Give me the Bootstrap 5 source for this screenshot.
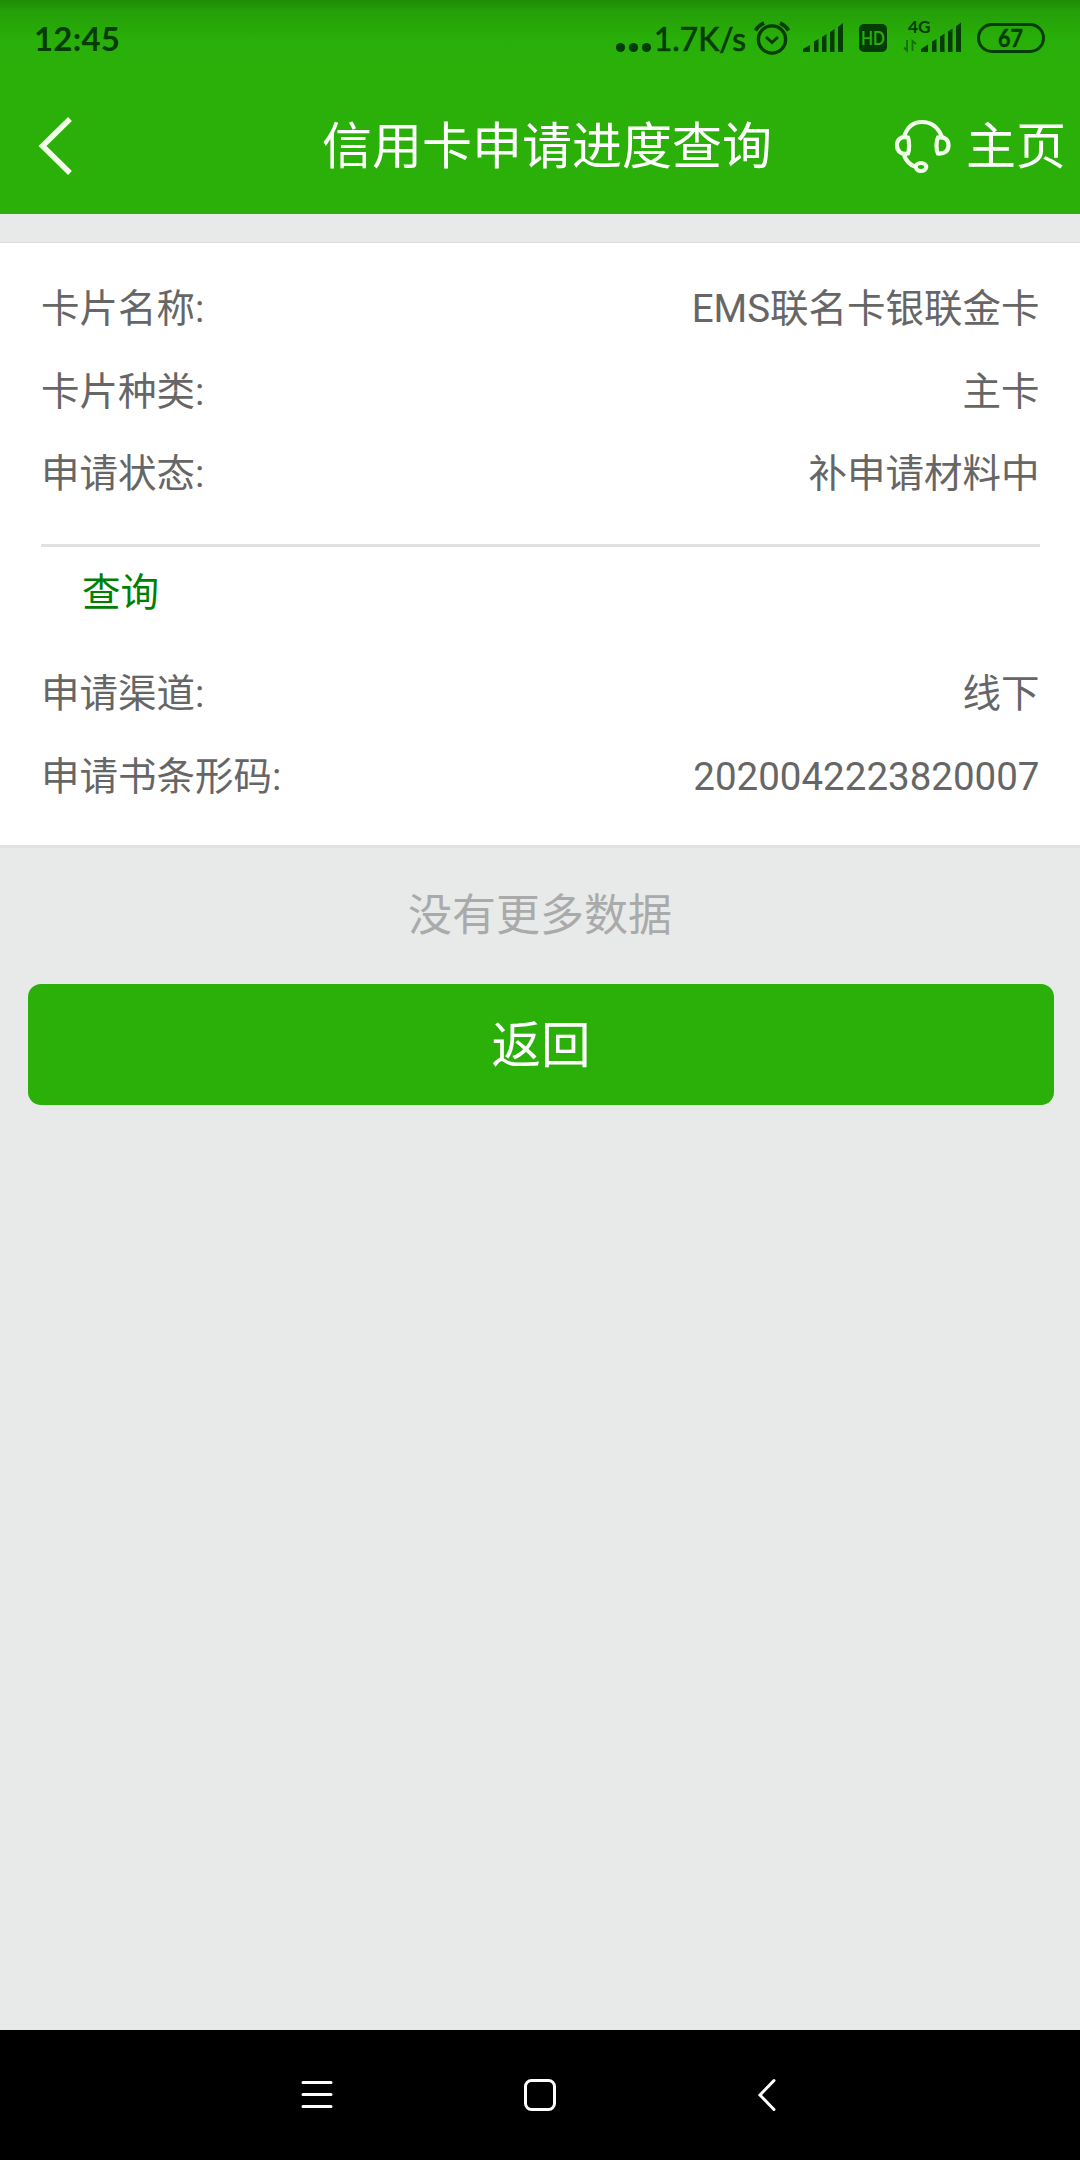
<!DOCTYPE html>
<html lang="zh-CN">
<head>
<meta charset="utf-8">
<meta name="viewport" content="width=device-width, initial-scale=1">
<title>信用卡申请进度查询</title>
<link rel="stylesheet" href="https://cdn.jsdelivr.net/npm/bootstrap@5.3.0/dist/css/bootstrap.min.css">
<style>
  body { font-family: Roboto, "Noto Sans CJK SC", sans-serif; background: #e8eaea; color: #666; }
  .screen { height: 2160px; width: 1080px; }
  .app-head { height: 214px; background: linear-gradient(#1f8c06 0, #25a008 12px, #29af09 40px, #2ab009 60px); }
  .status-bar { height: 78px; color: #043c06; font-family: Lato, sans-serif; padding-left: 34px; }
  .clock { font-size: 33px; font-weight: 700; letter-spacing: .2px; line-height: 76px; }
  .title-bar { height: 136px; font-size: 50px; line-height: 139px; }
  .side-l { width: 322px; padding-left: 38px; }
  .side-r { width: 308px; padding-right: 14px; gap: 15px; }
  .home-link { padding-top: 2px; }
  .info { margin-top: 28px; height: 606px; border-top: 1px solid #dadcdc; border-bottom: 3px solid #e0e2e2; padding: 25px 40.5px 0 41px; font-size: 38.5px; }
  .info-row { height: 82.7px; line-height: 82.7px; }
  .rule { height: 3px; background: #e0e0e0; margin: 28px -.5px 0 0; }
  .query { color: #008000; padding-left: 41px; line-height: 92px; height: 106px; display: block; text-decoration: none; }
  .no-more { color: #aaa; font-size: 44px; line-height: 136px; height: 136px; }
  .btn-back { margin: 0 26px 0 28px; height: 121px; border-radius: 13px; background: #2ab009; color: #fff; font-size: 49.5px; padding: 3px 0 0; line-height: 118px; border: 0; }
  .btn-back:hover { background: #2ab009; color: #fff; }
  .sys-nav { height: 130px; background: #000; }
</style>
</head>
<body>
<div class="screen d-flex flex-column overflow-hidden">
  <header class="app-head text-white">
    <div class="status-bar d-flex justify-content-between">
      <span class="clock">12:45</span>
      <svg width="470" height="78" viewBox="610 0 470 78" fill="#043c06" font-family="Lato, sans-serif">
        <circle cx="620.5" cy="47.5" r="4.6"/><circle cx="633.5" cy="47.5" r="4.6"/><circle cx="646.5" cy="47.5" r="4.6"/>
        <text x="654" y="50.500" font-size="32.500" textLength="92" lengthAdjust="spacingAndGlyphs" stroke="#043c06" stroke-width=".7">1.7K/s</text>
        <g fill="none" stroke="#043c06" stroke-width="3.4">
          <circle cx="772" cy="39.5" r="13.6"/>
          <path d="M766 37l6 5.5 6-5.5" stroke-width="3"/>
          <path d="M755.500 30.500Q758.500 25.500 764 23M788.500 30.500Q785.500 25.500 780 23" stroke-width="3.600"/>
        </g>
        <path d="M803 52v-3l7-4v7zM814 52V41.500l4.500-2.500v13zM822 52V37l4.500-3v18zM830 52V32l4.500-3v23zM838 52V27l5-4v29z"/>
        <rect x="859" y="24" width="28" height="28" rx="5"/>
        <text x="873" y="45" font-size="18.500" font-weight="700" text-anchor="middle" fill="#2aa90d" textLength="24" lengthAdjust="spacingAndGlyphs">HD</text>
        <text x="908" y="33" font-size="17" font-weight="700" textLength="22.500" lengthAdjust="spacingAndGlyphs">4G</text>
        <path d="M907 40v10.500l-3-3M912.500 51V41l3.500 3" fill="none" stroke="#146e0a" stroke-width="1.800"/>
        <path d="M921 52v-3l7-4.500V52zM932 52V41.500l4.500-2.500v13zM940 52V36.500l4.500-3V52zM948 52V31.500l4.500-3V52zM956 52V26.500l5-4V52z"/>
        <rect x="978.500" y="24.500" width="65" height="27" rx="13.500" fill="none" stroke="#043c06" stroke-width="3"/>
        <text x="1010.500" y="46.500" font-size="24.500" font-weight="700" text-anchor="middle" textLength="25" lengthAdjust="spacingAndGlyphs" stroke="#043c06" stroke-width=".4">67</text>
      </svg>
    </div>
    <div class="title-bar d-flex">
      <div class="side-l d-flex align-items-center">
        <svg width="36" height="60" viewBox="0 0 36 60" fill="none" stroke="#f1ffe9" stroke-width="5.500"><path d="M32 3L4.500 30l27.500 27"/></svg>
      </div>
      <div class="flex-grow-1 text-nowrap">信用卡申请进度查询</div>
      <div class="side-r d-flex align-items-center justify-content-end">
        <svg width="58" height="58" viewBox="893 116 58 58" fill="none" stroke="#efffe8" stroke-width="4.200">
          <path d="M904 136C907 126 913 121 922 121S938 126 942 136"/>
          <path d="M908 136.500C900 135 897 139 897 144.500S901 154 908 152.500C909.500 149 909.500 140 908 136.500Z"/>
          <path d="M938 136.500C946 135.500 948.500 139.500 948.500 144.500S945 153 938 152.500C936 149 936 140 938 136.500Z"/>
          <path d="M904 154Q907 163 916 166"/><ellipse cx="921" cy="166" rx="5.200" ry="4"/>
        </svg>
        <span class="home-link">主页</span>
      </div>
    </div>
  </header>

  <main class="flex-grow-1 d-flex flex-column">
    <section class="info bg-white">
      <div class="info-row d-flex justify-content-between"><span>卡片名称:</span><span>EMS联名卡银联金卡</span></div>
      <div class="info-row d-flex justify-content-between"><span>卡片种类:</span><span>主卡</span></div>
      <div class="info-row d-flex justify-content-between"><span>申请状态:</span><span>补申请材料中</span></div>
      <div class="rule"></div>
      <a class="query" href="#">查询</a>
      <div class="info-row d-flex justify-content-between"><span>申请渠道:</span><span>线下</span></div>
      <div class="info-row d-flex justify-content-between"><span>申请书条形码:</span><span>2020042223820007</span></div>
    </section>
    <div class="no-more text-center">没有更多数据</div>
    <button class="btn btn-back" type="button">返回</button>
  </main>

  <nav class="sys-nav">
    <svg width="1080" height="130" viewBox="0 2030 1080 130" fill="none" stroke="#fff" stroke-width="3" stroke-linecap="round">
      <path d="M303 2082.500h28M303 2094.500h28M303 2106.500h28"/>
      <rect x="525.500" y="2080.500" width="29" height="29" rx="6"/>
      <path d="M774 2080.500l-14 14.500 14 14.500"/>
    </svg>
  </nav>
</div>
<script src="https://cdn.jsdelivr.net/npm/bootstrap@5.3.0/dist/js/bootstrap.bundle.min.js"></script>
</body>
</html>
